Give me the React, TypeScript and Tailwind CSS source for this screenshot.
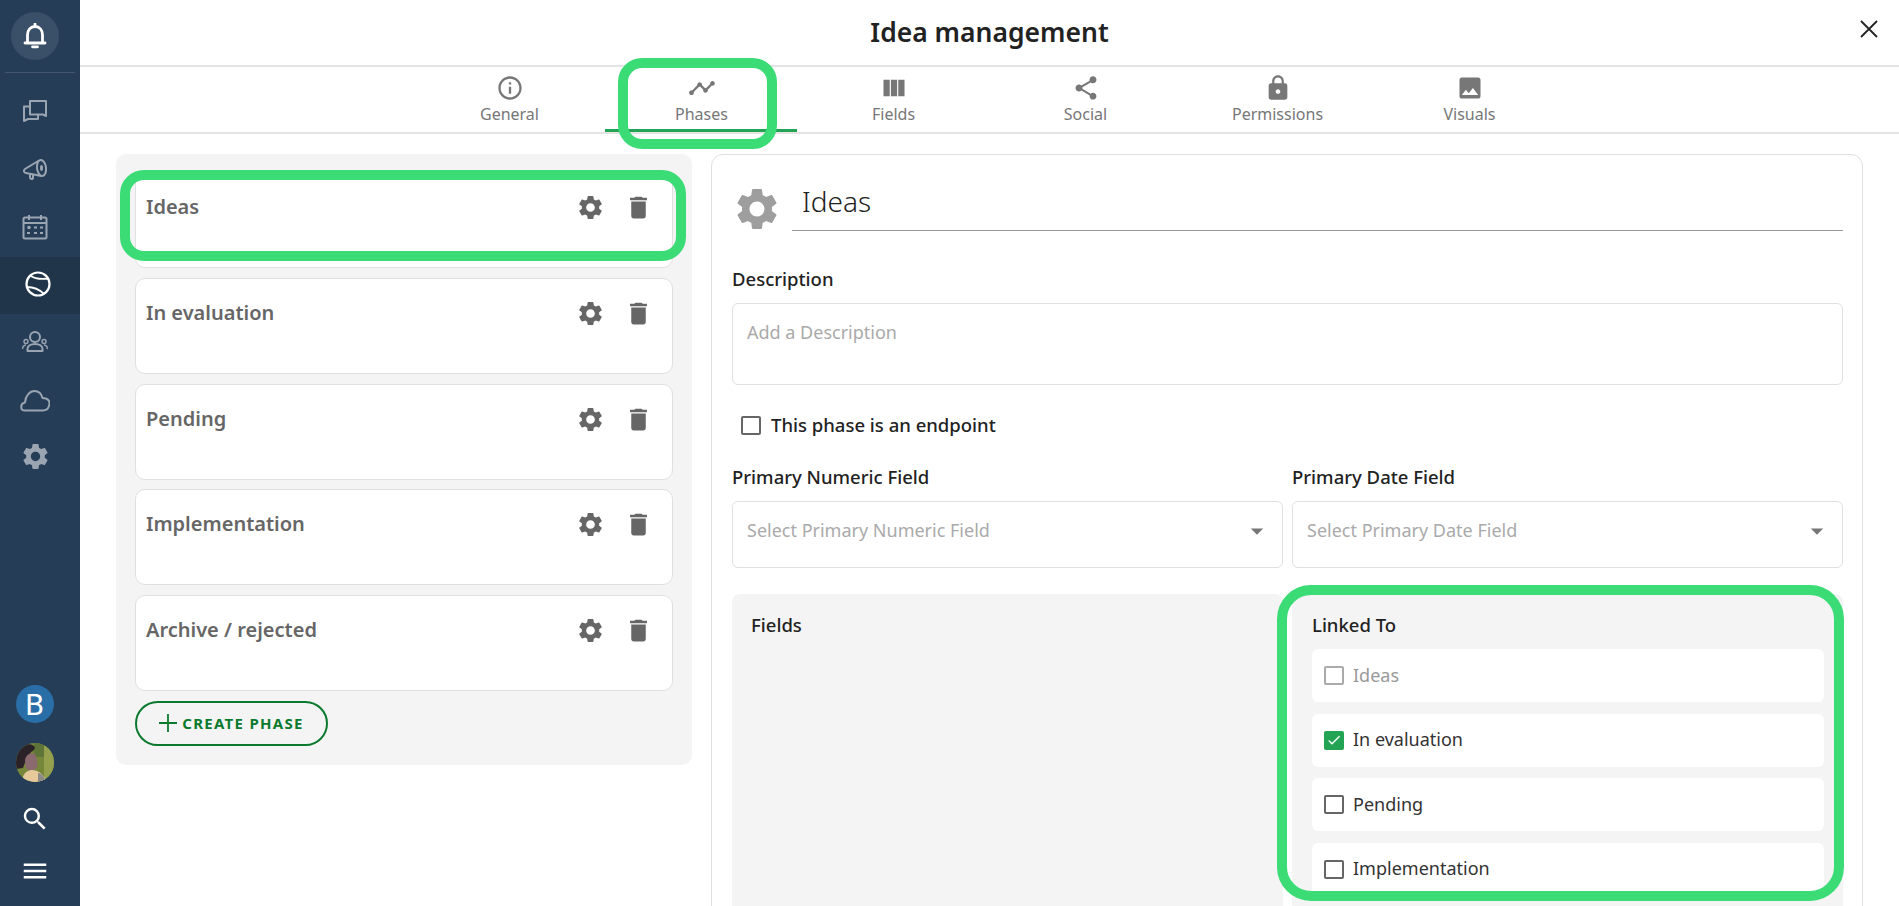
import React from "react";
import { MdSettings, MdDelete, MdInfoOutline, MdTimeline, MdViewColumn, MdShare, MdLock, MdImage, MdSearch, MdMenu, MdArrowDropDown, MdCheck } from "react-icons/md";

const tabs = [
  { label: "General", Icon: MdInfoOutline },
  { label: "Phases", Icon: MdTimeline, active: true },
  { label: "Fields", Icon: MdViewColumn },
  { label: "Social", Icon: MdShare },
  { label: "Permissions", Icon: MdLock },
  { label: "Visuals", Icon: MdImage },
];

const phases = ["Ideas", "In evaluation", "Pending", "Implementation", "Archive / rejected"];

const BellIcon = () => (
  <svg width="24" height="26" viewBox="0 0 24 26" fill="none" stroke="white" strokeWidth="2.800">
    <path d="M4.500 19V12c0-5 3-8.500 7.500-8.500S19.500 7 19.500 12v7" />
    <path d="M2 20h20" strokeLinecap="round" />
    <path d="M12 1v2" strokeLinecap="round" />
    <path d="M9.500 23.800h5" strokeLinecap="round" />
  </svg>
);

const ChatIcon = () => (
  <svg width="26" height="24" viewBox="0 0 26 24" fill="none" stroke="#9aa5b1" strokeWidth="2">
    <path d="M8 2h16v15l-3-1.500H8z" strokeLinejoin="round" />
    <path d="M8 7.500H2V22l4-2h10v-4" strokeLinejoin="round" />
  </svg>
);

const MegaphoneIcon = () => (
  <svg width="26" height="24" viewBox="0 0 26 24" fill="none" stroke="#9aa5b1" strokeWidth="2">
    <ellipse cx="19.500" cy="10" rx="4.500" ry="8" transform="rotate(-8 19.500 10)" />
    <path d="M17 2.500 3 11c-2 1.500-1 4 1 4l15.500 3" />
    <path d="M8 16v3.500c0 2 3 2 3 .5v-3" />
    <ellipse cx="19.500" cy="10" rx="1.500" ry="3" fill="#9aa5b1" stroke="none" />
  </svg>
);

const CalendarIcon = () => (
  <svg width="26" height="26" viewBox="0 0 26 26" fill="none" stroke="#9aa5b1" strokeWidth="2">
    <rect x="1.500" y="3.500" width="23" height="21" rx="1.500" />
    <path d="M1.500 9h23M7 1v5M19 1v5" />
    <circle cx="7" cy="13.500" r="1.800" fill="#9aa5b1" stroke="none" />
    <path d="M12 13.500h3M18 13.500h3M5 19h3M12 19h3M18 19h3" />
  </svg>
);

const GlobeIcon = () => (
  <svg width="26" height="26" viewBox="0 0 26 26" fill="none" stroke="white" strokeWidth="2.200">
    <circle cx="13" cy="13" r="11.500" />
    <path d="M5 4.500c5 3.500 12 4 19 3" strokeWidth="1.800" />
    <path d="M2 16c6 0 12 2 17 7" strokeWidth="1.800" />
  </svg>
);

const UsersIcon = () => (
  <svg width="26" height="22" viewBox="0 0 26 22" fill="none" stroke="#9aa5b1" strokeWidth="2">
    <circle cx="13" cy="6" r="5" />
    <path d="M5.500 20v-2c0-3 3-5 7.500-5s7.500 2 7.500 5v2z" strokeLinejoin="round" />
    <circle cx="4" cy="10.500" r="2" strokeWidth="1.400" />
    <circle cx="22" cy="10.500" r="2" strokeWidth="1.400" />
    <path d="M1 18c-1-2 1-4 3-4M25 18c1-2-1-4-3-4" strokeWidth="1.400" />
  </svg>
);

const CloudIcon = () => (
  <svg width="30" height="22" viewBox="0 0 30 22" fill="none" stroke="#9aa5b1" strokeWidth="2">
    <path d="M5 20.500c-5 0-5-7 0-8C5.500 5.500 10 1 14.500 1c4 0 7 3 8 7 6 0 8 3.500 6.500 8-1 3-3 4.500-6 4.500z" strokeLinejoin="round" />
  </svg>
);

// photo stand-in, no raster images here
const AvatarPhoto = () => (
  <svg width="38" height="39" viewBox="0 0 38 39" className="rounded-full">
    <rect width="38" height="39" fill="#76873a" />
    <rect x="28" y="0" width="10" height="39" fill="#94a04e" />
    <rect x="18" y="0" width="10" height="14" fill="#5f7438" />
    <path d="M0 8c4-7 13-9 18-5 2 2 0 5-3 6l-5 8-3 8L0 26z" fill="#2b2228" />
    <path d="M9 17c1-6 6-8 10-6 2 4 3 9 2 13-2 4-7 5-10 2-2-2-2-6-2-9z" fill="#8a6a6e" />
    <path d="M6 39c0-7 4-12 10-12s12 4 14 12z" fill="#e6c99a" />
    <path d="M22 30c3 0 6 3 8 9h-8z" fill="#8b8a86" />
  </svg>
);

const RailIcon = ({ children, active, className }: { children: React.ReactNode; active?: boolean; className?: string }) => (
  <div className={`h-[57px] flex items-center justify-center ${active ? "bg-[#203549] pr-[4px] pb-[3px]" : "pr-[10px]"} ${className ?? ""}`}>
    {children}
  </div>
);

const Sidebar = () => (
  <div className="w-[80px] shrink-0 h-full bg-[#263d58] flex flex-col">
    <div className="h-[72px] flex items-center justify-center pr-[10px]">
      <div className="w-[48px] h-[48px] rounded-full bg-[#3a4f68] flex items-center justify-center">
        <BellIcon />
      </div>
    </div>
    <div className="mx-[5px] border-t border-[#43566e] mb-[9px]" />
    <RailIcon><ChatIcon /></RailIcon>
    <RailIcon className="mt-[2px]"><MegaphoneIcon /></RailIcon>
    <RailIcon><CalendarIcon /></RailIcon>
    <RailIcon active className="mt-[2px]"><GlobeIcon /></RailIcon>
    <RailIcon className="-mt-[1px]"><UsersIcon /></RailIcon>
    <RailIcon className="mt-[2px]"><CloudIcon /></RailIcon>
    <RailIcon className="-mt-[1px]"><MdSettings size={31} color="#9aa5b1" /></RailIcon>
    <div className="flex-1" />
    <div className="flex flex-col items-center pr-[11px]">
      <div className="w-[38px] h-[38px] rounded-full bg-[#2a6ea8] flex items-center justify-center text-white text-[30px] font-['Roboto',sans-serif]">B</div>
      <div className="mt-[20px]"><AvatarPhoto /></div>
      <MdSearch size={30} color="white" className="mt-[22px]" />
      <MdMenu size={30} color="white" className="mt-[22px] mb-[20px]" />
    </div>
  </div>
);

const Checkbox = ({ state }: { state?: "checked" | "disabled" }) => {
  if (state === "checked") {
    return (
      <span className="w-[20px] h-[19px] rounded-[2px] bg-[#23a455] flex items-center justify-center shrink-0">
        <MdCheck size={16} color="white" />
      </span>
    );
  }
  return <span className={`w-[20px] h-[19px] rounded-[2px] border-2 bg-white shrink-0 ${state === "disabled" ? "border-[#aaaaaa]" : "border-[#666666]"}`} />;
};

const SelectField = ({ label, placeholder, className }: { label: string; placeholder: string; className: string }) => (
  <div className={className}>
    <div className="text-[18.5px] font-medium text-[#222222] leading-[24px]">{label}</div>
    <div className="mt-[12px] h-[67px] border border-[#e0e0e0] rounded-[6px] flex items-start justify-between pl-[14px] pr-[10px] pt-[16px]">
      <span className="text-[18px] text-[#aaaaaa] leading-[24px]">{placeholder}</span>
      <MdArrowDropDown size={30} color="#777777" className="-mt-[2px]" />
    </div>
  </div>
);

const links: { label: string; state?: "checked" | "disabled" }[] = [
  { label: "Ideas", state: "disabled" },
  { label: "In evaluation", state: "checked" },
  { label: "Pending" },
  { label: "Implementation" },
];

const Ring = ({ className }: { className: string }) => (
  <div className={`absolute border-[10px] border-[#3bdb76] ${className}`} />
);

export default function App() {
  return (
    <div className="relative w-[1899px] h-[906px] overflow-hidden bg-white flex font-['Noto_Sans',sans-serif]">
      <Sidebar />
      <div className="flex-1 min-w-0 flex flex-col">
        <div className="h-[67px] shrink-0 border-b-2 border-[#e4e4e4] relative flex items-center justify-center pt-[1px]">
          <h1 className="text-[26.5px] font-semibold text-[#222222]">Idea management</h1>
          <svg width="18" height="18" viewBox="0 0 18 18" className="absolute right-[21px] top-[20px]" stroke="#222222" strokeWidth="1.800">
            <path d="M1 1l16 16M17 1 1 17" />
          </svg>
        </div>
        <div className="h-[67px] shrink-0 border-b-2 border-[#e4e4e4] flex justify-center pr-[2px]">
          {tabs.map(({ label, Icon, active }) => (
            <div key={label} className={`w-[192px] flex flex-col items-center pt-[7px] pl-[2px] text-[#777777] ${active ? "border-b-[3px] border-[#23a455]" : ""}`}>
              <Icon size={28} color="#777777" />
              <span className="text-[16px] leading-[24px]">{label}</span>
            </div>
          ))}
        </div>
        <div className="flex-1 min-h-0 flex items-start gap-[19px] pl-[36px] pt-[20px]">
          <div className="w-[576px] bg-[#f4f4f4] rounded-[10px] pl-[19px] pr-[19px] pt-[18px] pb-[19px] flex flex-col gap-[9.75px]">
            {phases.map((phase) => (
              <div key={phase} className="h-[96px] bg-white border border-[#e0e0e0] rounded-[10px] flex items-start justify-between pl-[10px] pr-[19px] pt-[20px]">
                <span className="text-[20px] font-semibold text-[#666666] leading-[28px]">{phase}</span>
                <div className="flex items-center gap-[19px]">
                  <MdSettings size={29} color="#666666" />
                  <MdDelete size={29} color="#666666" />
                </div>
              </div>
            ))}
            <button className="w-[193px] h-[45px] border-2 border-[#0b7a2f] rounded-full flex items-center justify-center gap-[5px] text-[#0b7a2f] text-[15px] font-bold tracking-[1.3px]">
              <svg width="18" height="18" viewBox="0 0 18 18" stroke="#0b7a2f" strokeWidth="1.800"><path d="M9 0v18M0 9h18" /></svg>
              CREATE PHASE
            </button>
          </div>
          <div className="w-[1152px] h-[800px] shrink-0 border border-[#e0e0e0] rounded-[12px] pl-[20px] pr-[19px] overflow-hidden">
            <div className="flex items-start h-[102px]">
              <MdSettings size={50} color="#9e9e9e" className="mt-[29px]" />
              <div className="ml-[10px] flex-1 h-[76px] border-b border-[#999999] pl-[10px] pt-[28px] text-[28px] font-light text-[#222222] leading-[36px]">Ideas</div>
            </div>
            <div className="text-[18.5px] font-medium text-[#222222] leading-[24px] mt-[10px]">Description</div>
            <div className="mt-[12px] h-[82px] border border-[#e0e0e0] rounded-[6px] pl-[14px] pt-[16px] text-[18px] text-[#aaaaaa] leading-[24px]">Add a Description</div>
            <div className="mt-[28px] pl-[9px] flex items-center gap-[10px] h-[24px]">
              <Checkbox />
              <span className="text-[18.5px] font-medium text-[#222222]">This phase is an endpoint</span>
            </div>
            <div className="mt-[28px] flex gap-[9px]">
              <SelectField className="w-[551px]" label="Primary Numeric Field" placeholder="Select Primary Numeric Field" />
              <SelectField className="w-[551px]" label="Primary Date Field" placeholder="Select Primary Date Field" />
            </div>
            <div className="mt-[26px] flex gap-[9px]">
              <div className="w-[551px] h-[400px] bg-[#f4f4f4] rounded-[8px] pl-[19px] pt-[19px]">
                <div className="text-[18.5px] font-medium text-[#222222] leading-[24px]">Fields</div>
              </div>
              <div className="w-[551px] h-[400px] bg-[#f4f4f4] rounded-[8px] pl-[20px] pr-[19px] pt-[19px]">
                <div className="text-[18.5px] font-medium text-[#222222] leading-[24px]">Linked To</div>
                <div className="mt-[12px] flex flex-col gap-[11.500px]">
                  {links.map((link) => (
                    <div key={link.label} className="h-[53px] bg-white rounded-[6px] flex items-center pl-[12px] gap-[9px]">
                      <Checkbox state={link.state} />
                      <span className={`text-[18px] -mt-[1px] ${link.state === "disabled" ? "text-[#999999]" : "text-[#333333]"}`}>{link.label}</span>
                    </div>
                  ))}
                </div>
              </div>
            </div>
          </div>
        </div>
      </div>
      <Ring className="left-[618px] top-[58px] w-[159px] h-[91px] rounded-[24px]" />
      <Ring className="left-[120px] top-[170px] w-[566px] h-[91px] rounded-[24px]" />
      <Ring className="left-[1277px] top-[585px] w-[567px] h-[316px] rounded-[34px]" />
    </div>
  );
}
